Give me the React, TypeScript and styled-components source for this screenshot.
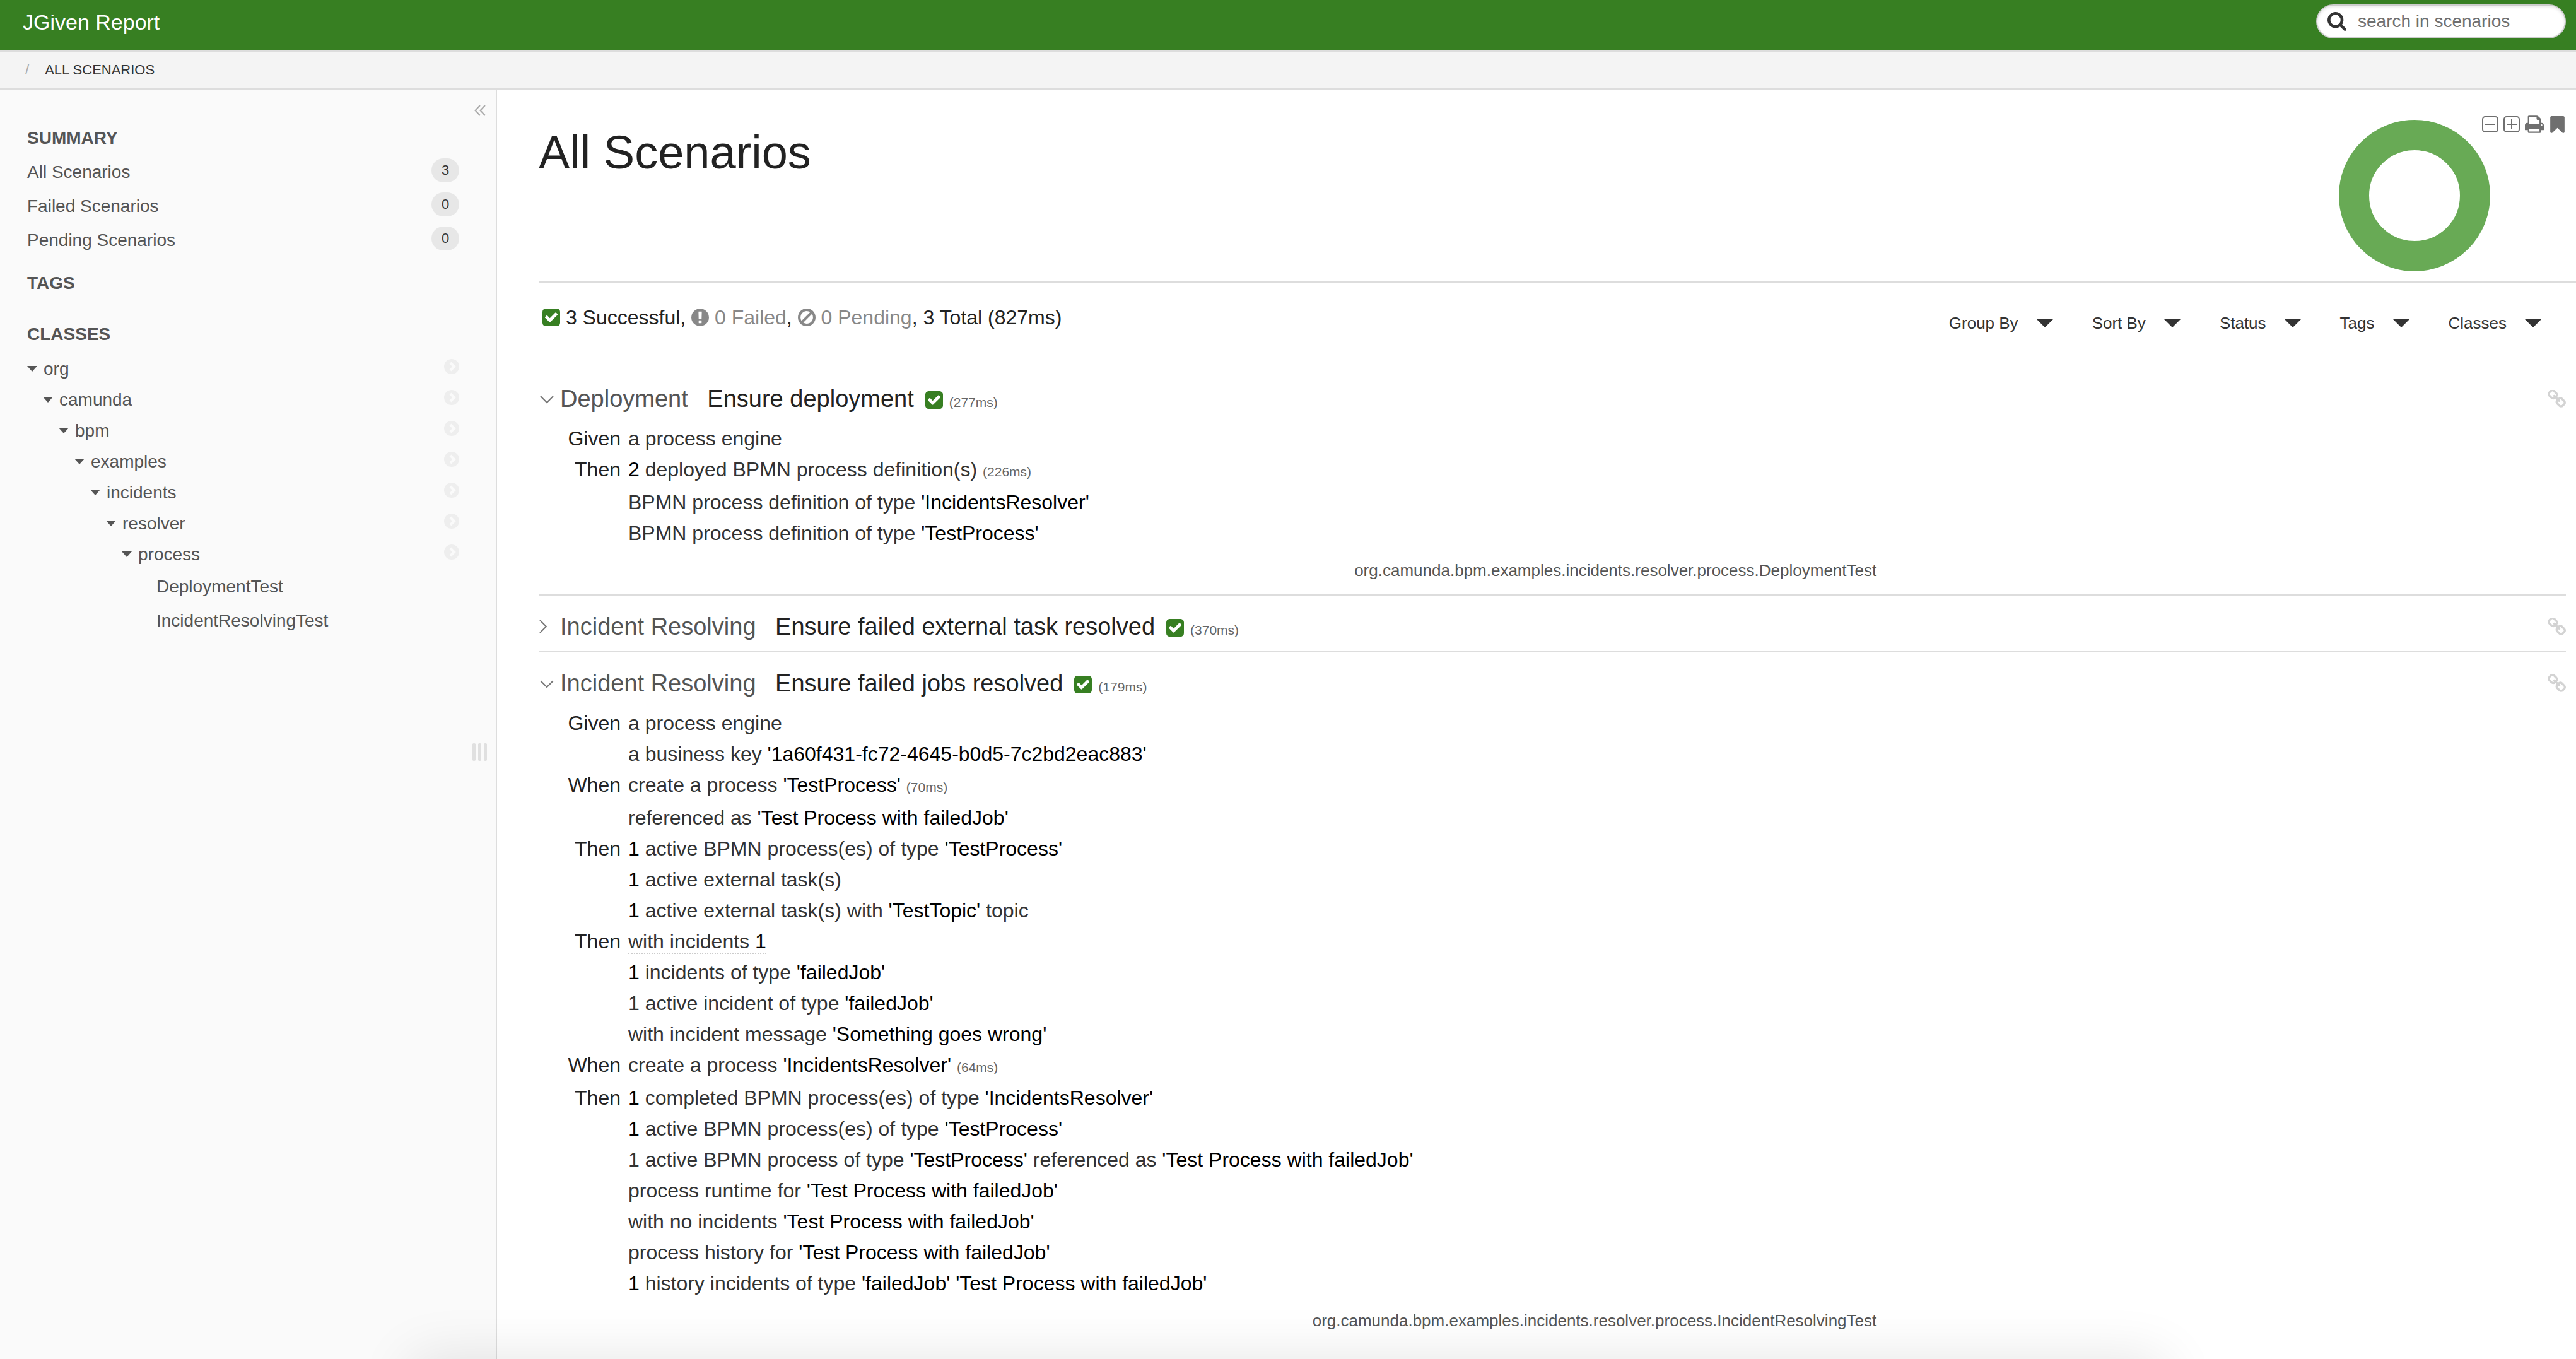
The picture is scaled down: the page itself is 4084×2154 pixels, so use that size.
import React from 'react';
import styled, { createGlobalStyle } from 'styled-components';

const GlobalStyle = createGlobalStyle`
  *, *::before, *::after { box-sizing: border-box; }
  body {
    margin: 0;
    background: #fff;
    color: #222;
    font-family: "Liberation Sans", Arial, sans-serif;
  }
  button {
    padding: 0;
    border: 0;
    background: none;
    color: inherit;
    font: inherit;
    text-align: left;
    cursor: pointer;
  }
  a { color: inherit; text-decoration: none; }
  ul { margin: 0; padding: 0; list-style: none; }
  svg { display: block; flex: none; }
`;

/* ---------- icons ---------- */

const Glyph = styled.svg<{ $size: number; $inline?: boolean }>`
  width: ${p => p.$size}px;
  height: ${p => p.$size}px;
  fill: currentColor;
  ${p => p.$inline && 'display: inline-block; vertical-align: -3px;'}
`;

const Stroke = styled(Glyph)`
  fill: none;
  stroke: currentColor;
`;

const CheckSquare = () => (
  <Glyph $size={28} $inline viewBox="128 128 1536 1536" aria-hidden="true">
    <path d="M813 1299l614-614q19-19 19-45t-19-45l-102-102q-19-19-45-19t-45 19l-467 467-211-211q-19-19-45-19t-45 19l-102 102q-19 19-19 45t19 45l358 358q19 19 45 19t45-19zm851-883v960q0 119-84.5 203.5t-203.5 84.5h-960q-119 0-203.5-84.5t-84.5-203.5v-960q0-119 84.5-203.5t203.5-84.5h960q119 0 203.5 84.5t84.5 203.5z" />
  </Glyph>
);

const Exclamation = () => (
  <Glyph $size={28} $inline viewBox="128 128 1536 1536" aria-hidden="true">
    <path d="M896 128q209 0 385.5 103t279.5 279.5 103 385.5-103 385.5-279.5 279.5-385.5 103-385.5-103-279.5-279.5-103-385.5 103-385.5 279.5-279.5 385.5-103zm128 1247v-190q0-14-9-23.5t-22-9.5h-192q-13 0-23 10t-10 23v190q0 13 10 23t23 10h192q13 0 22-9.5t9-23.5zm-2-344l18-621q0-12-10-18-10-8-24-8h-220q-14 0-24 8-10 6-10 18l17 621q0 10 10 17.5t24 7.5h185q14 0 23.5-7.5t10.5-17.5z" />
  </Glyph>
);

const Ban = () => (
  <Glyph $size={28} $inline viewBox="128 125 1536 1536" aria-hidden="true">
    <path d="M1440 893q0-161-87-295l-754 753q137 89 297 89 111 0 211.5-43.5t173.5-116.5 116-174.5 43-212.5zm-999 299l755-754q-135-91-300-91-148 0-273 73t-198 199-73 274q0 162 89 299zm1223-299q0 157-61 300t-163.5 246-245 164-298.5 61-298.5-61-245-164-163.5-246-61-300 61-299.5 163.5-245.5 245-164 298.5-61 298.5 61 245 164 163.5 245.5 61 299.5z" />
  </Glyph>
);

const SearchIcon = () => (
  <Glyph $size={30} viewBox="64 128 1664 1664" aria-hidden="true">
    <path d="M1216 832q0-185-131.5-316.5t-316.5-131.5-316.5 131.5-131.5 316.5 131.5 316.5 316.5 131.5 316.5-131.5 131.5-316.5zm512 832q0 52-38 90t-90 38q-54 0-90-38l-343-342q-179 124-399 124-143 0-273.5-55.5t-225-150-150-225-55.5-273.5 55.5-273.5 150-225 225-150 273.5-55.5 273.5 55.5 225 150 150 225 55.5 273.5q0 220-124 399l343 343q37 37 37 90z" />
  </Glyph>
);

const LinkIcon = () => (
  <Glyph $size={29} viewBox="80 80 1632 1632" aria-hidden="true">
    <path d="M1520 1216q0-40-28-68l-208-208q-28-28-68-28-42 0-72 32 3 3 19 18.5t21.5 21.5 15 19 13 25.5 3.5 27.5q0 40-28 68t-68 28q-15 0-27.5-3.5t-25.5-13-19-15-21.5-21.5-18.5-19q-33 31-33 73 0 40 28 68l206 207q27 27 68 27 40 0 68-26l147-146q28-28 28-67zm-703-705q0-40-28-68l-206-207q-28-28-68-28-39 0-68 27l-147 146q-28 28-28 67 0 40 28 68l208 208q27 27 68 27 42 0 72-31-3-3-19-18.5t-21.5-21.5-15-19-13-25.5-3.5-27.5q0-40 28-68t68-28q15 0 27.5 3.5t25.5 13 19 15 21.5 21.5 18.5 19q33-31 33-73zm895 705q0 120-85 203l-147 146q-83 83-203 83-121 0-204-85l-206-207q-83-83-83-203 0-123 88-209l-88-88q-86 88-208 88-120 0-204-84l-208-208q-84-84-84-204t85-203l147-146q83-83 203-83 121 0 204 85l206 207q83 83 83 203 0 123-88 209l88 88q86-88 208-88 120 0 204 84l208 208q84 84 84 204z" />
  </Glyph>
);

const PrintIcon = () => (
  <Glyph $size={30} viewBox="64 64 1664 1664" aria-hidden="true">
    <path d="M448 1536h896v-256h-896v256zm0-640h896v-384h-160q-40 0-68-28t-28-68v-160h-640v640zm1152 64q0-26-19-45t-45-19-45 19-19 45 19 45 45 19 45-19 19-45zm128 0v416q0 13-9.5 22.5t-22.5 9.5h-224v160q0 40-28 68t-68 28h-960q-40 0-68-28t-28-68v-160h-224q-13 0-22.5-9.5t-9.5-22.5v-416q0-79 56.5-135.5t135.5-56.5h64v-544q0-40 28-68t68-28h672q40 0 88 20t76 48l152 152q28 28 48 76t20 88v256h64q79 0 135.5 56.5t56.5 135.5z" />
  </Glyph>
);

const BookmarkIcon = () => (
  <Glyph $size={27} viewBox="134 128 1524 1524" aria-hidden="true">
    <path d="M1420 128q23 0 44 9 33 13 52.5 41t19.5 62v1289q0 34-19.5 62t-52.5 41q-19 8-44 8-48 0-83-32l-441-424-441 424q-36 33-83 33-23 0-44-9-33-13-52.5-41t-19.5-62v-1289q0-34 19.5-62t52.5-41q21-9 44-9h1048z" />
  </Glyph>
);

const BoxIcon = ({ plus = false }: { plus?: boolean }) => (
  <Stroke $size={26} viewBox="0 0 26 26" strokeWidth="2" aria-hidden="true">
    <rect x="1" y="1" width="24" height="24" rx="4" />
    <path d={plus ? 'M5 13h16M13 5v16' : 'M5 13h16'} />
  </Stroke>
);

const ChevronCircle = () => (
  <Glyph $size={24} viewBox="0 0 24 24" aria-hidden="true">
    <circle cx="12" cy="12" r="12" />
    <path d="M10 6l6 6-6 6" fill="none" stroke="#fafafa" strokeWidth="4" />
  </Glyph>
);

const DoubleAngle = () => (
  <Stroke $size={18} viewBox="0 0 18 18" strokeWidth="2" aria-hidden="true">
    <path d="M9 1L1.500 9 9 17M17 1L9.500 9 17 17" />
  </Stroke>
);

const Angle = ({ open }: { open: boolean }) => (
  <Stroke $size={24} viewBox="0 0 24 24" strokeWidth="2" aria-hidden="true">
    <path d={open ? 'M3 8l10 10L23 8' : 'M2 2l10 10L2 22'} />
  </Stroke>
);

/* ---------- page frame ---------- */

const Page = styled.div`
  display: flex;
  flex-direction: column;
  min-height: 100vh;
`;

const TopBar = styled.header`
  display: flex;
  align-items: center;
  justify-content: space-between;
  height: 80px;
  padding: 0 16px 12px 36px;
  background: #377f22;
  color: #fff;
`;

const Brand = styled.a`
  padding-top: 2px;
  font-size: 34px;
  line-height: 48px;
`;

const SearchBox = styled.label`
  display: flex;
  align-items: center;
  gap: 18px;
  width: 396px;
  height: 54px;
  padding: 0 18px 0 16px;
  border: 2px solid #ccc;
  border-radius: 27px;
  background: #fff;
  box-shadow: inset 0 2px 4px rgba(0, 0, 0, 0.1);
  color: #333;
`;

const SearchInput = styled.input`
  flex: 1;
  min-width: 0;
  padding: 0;
  border: 0;
  outline: 0;
  background: none;
  color: #333;
  font: 28px/40px "Liberation Sans", Arial, sans-serif;
  &::placeholder { color: #6f6f6f; opacity: 1; }
`;

const Breadcrumbs = styled.nav`
  display: flex;
  align-items: center;
  gap: 25px;
  height: 62px;
  padding-left: 40px;
  border: solid #ddd;
  border-width: 2px 0;
  background: #f4f4f4;
  color: #333;
  font-size: 22px;
  text-transform: uppercase;
`;

const Slash = styled.span`
  color: #aaa;
`;

const Body = styled.div`
  display: flex;
  flex: 1;
`;

/* ---------- sidebar ---------- */

const Sidebar = styled.aside`
  display: flex;
  flex: none;
  gap: 21px;
  width: 788px;
  padding-right: 14px;
  border-right: 2px solid #ddd;
  background: #fafafa;
  color: #555;
  font-size: 28px;
`;

const SidebarContent = styled.div`
  display: flex;
  flex: 1;
  flex-direction: column;
  gap: 14px;
  padding: 50px 0 0 43px;
`;

const Rail = styled.div`
  display: flex;
  flex-direction: column;
  align-items: center;
  width: 23px;
  padding-top: 24px;
`;

const CollapseButton = styled.button`
  color: #aaa;
`;

const Handle = styled.div`
  display: flex;
  flex: 1;
  align-items: center;
  gap: 4px;
  margin-top: 46px;
  &::before, &::after, & > span {
    content: "";
    width: 5px;
    height: 28px;
    border-radius: 2px;
    background: #e0e0e0;
  }
`;

const SideHeading = styled.h2`
  margin: 0;
  font-size: 28px;
  line-height: 54px;
  text-transform: uppercase;
`;

const SummaryRow = styled.li`
  display: flex;
  align-items: flex-start;
  justify-content: space-between;
  line-height: 54px;
`;

const Badge = styled.span`
  width: 44px;
  height: 38px;
  margin-top: 5px;
  border-radius: 19px;
  background: #e7e7e7;
  color: #333;
  font-size: 22px;
  line-height: 38px;
  text-align: center;
`;

const TagList = styled.ul`
  padding-bottom: 13px;
`;

const Tree = styled.ul`
  padding-top: 3px;
`;

const TreeRow = styled.li<{ $depth: number }>`
  display: flex;
  align-items: flex-start;
  justify-content: space-between;
  padding-left: ${p => p.$depth * 25}px;
  line-height: 49px;
`;

const LeafRow = styled(TreeRow)`
  line-height: 54px;
  & > a { margin-left: 30px; }
`;

const TreeToggle = styled.button`
  display: flex;
  align-items: center;
  gap: 10px;
  &::before {
    content: "";
    border: solid transparent;
    border-width: 9px 8px 0;
    border-top-color: #555;
  }
`;

const ShowButton = styled.button`
  padding-top: 9px;
  color: #eee;
`;

/* ---------- main column ---------- */

const Main = styled.main`
  flex: 1;
  min-width: 0;
  padding-left: 66px;
`;

const Hero = styled.header`
  position: relative;
  display: flex;
  justify-content: space-between;
  padding: 48px 136px 16px 0;
  border-bottom: 2px solid #ddd;
`;

const Title = styled.h1`
  margin: 0;
  font-size: 74px;
  font-weight: 400;
  line-height: 104px;
`;

const Donut = styled.svg`
  width: 240px;
  height: 240px;
  fill: none;
  stroke: #68aa55;
  stroke-width: 48px;
`;

const Tools = styled.div`
  position: absolute;
  top: 40px;
  right: 16px;
  display: flex;
  align-items: center;
  gap: 8px;
  color: #6f6f6f;
`;

const Toolbar = styled.div`
  display: flex;
  align-items: flex-start;
  justify-content: space-between;
  padding: 31px 54px 0 6px;
`;

const Statistics = styled.div`
  font-size: 32px;
  line-height: 48px;
`;

const Green = styled.span`
  color: #377f22;
`;

const Muted = styled.span`
  color: #888;
`;

const Filters = styled.div`
  display: flex;
  gap: 61px;
  padding-top: 9px;
`;

const FilterButton = styled.button`
  display: flex;
  align-items: center;
  gap: 28px;
  color: #333;
  font-size: 26px;
  line-height: 48px;
  &::after {
    content: "";
    border: solid transparent;
    border-width: 14px 14px 0;
    border-top-color: #333;
  }
`;

const Scenarios = styled.div`
  padding: 47px 16px 0 0;
`;

const Scenario = styled.section`
  padding: 24px 0 14px;
  & + & { border-top: 2px solid #ddd; }
`;

const ScenarioHead = styled.div`
  display: flex;
  align-items: center;
  justify-content: space-between;
`;

const ScenarioTitle = styled.h3`
  margin: 0;
  font-size: 38px;
  font-weight: 400;
  line-height: 50px;
`;

const ScenarioToggle = styled.button`
  display: flex;
  align-items: center;
  gap: 10px;
  color: #777;
`;

const ClassName = styled.span`
  margin-right: 20px;
  color: #555;
`;

const ScenarioName = styled.span`
  margin-right: 18px;
  color: #222;
`;

const Duration = styled.small`
  color: #666;
  font-size: 21px;
  line-height: 21px;
`;

const HeadDuration = styled(Duration)`
  margin-left: 10px;
`;

const Permalink = styled.a`
  color: #d3d3d3;
`;

const Steps = styled.div`
  margin-top: 14px;
  font-size: 32px;
  line-height: 49px;
`;

const Step = styled.div<{ $timed: boolean }>`
  display: grid;
  grid-template-columns: 130px 1fr;
  column-gap: 12px;
  padding-bottom: ${p => (p.$timed ? 3 : 0)}px;
`;

const Intro = styled.span`
  color: #222;
  text-align: right;
`;

const StepText = styled.div`
  color: #333;
`;

const Value = styled.span`
  color: #000;
`;

const Hint = styled.span`
  border-bottom: 2px dotted #ccc;
`;

const TestClass = styled.div`
  width: 66%;
  padding: 15px 0 5px;
  color: #555;
  font-size: 26px;
  line-height: 38px;
  text-align: right;
`;

const BottomShade = styled.div`
  position: fixed;
  top: 100%;
  left: 16%;
  right: 16%;
  height: 200px;
  box-shadow: 0 0 90px rgba(0, 0, 0, 0.11);
  pointer-events: none;
`;

/* ---------- data ---------- */

const summary = [
  { label: 'All Scenarios', count: 3 },
  { label: 'Failed Scenarios', count: 0 },
  { label: 'Pending Scenarios', count: 0 },
];

const packages = ['org', 'camunda', 'bpm', 'examples', 'incidents', 'resolver', 'process'];
const testClasses = ['DeploymentTest', 'IncidentResolvingTest'];
const filters = ['Group By', 'Sort By', 'Status', 'Tags', 'Classes'];

interface StepData {
  intro?: string;
  /* step arguments are wrapped in braces */
  text: string;
  time?: string;
  hint?: boolean;
}

interface ScenarioData {
  group: string;
  name: string;
  time: string;
  testClass?: string;
  steps?: StepData[];
}

const scenarios: ScenarioData[] = [
  {
    group: 'Deployment',
    name: 'Ensure deployment',
    time: '277ms',
    testClass: 'org.camunda.bpm.examples.incidents.resolver.process.DeploymentTest',
    steps: [
      { intro: 'Given', text: 'a process engine' },
      { intro: 'Then', text: '{2} deployed BPMN process definition(s)', time: '226ms' },
      { text: "BPMN process definition of type {'IncidentsResolver'}" },
      { text: "BPMN process definition of type {'TestProcess'}" },
    ],
  },
  { group: 'Incident Resolving', name: 'Ensure failed external task resolved', time: '370ms' },
  {
    group: 'Incident Resolving',
    name: 'Ensure failed jobs resolved',
    time: '179ms',
    testClass: 'org.camunda.bpm.examples.incidents.resolver.process.IncidentResolvingTest',
    steps: [
      { intro: 'Given', text: 'a process engine' },
      { text: "a business key {'1a60f431-fc72-4645-b0d5-7c2bd2eac883'}" },
      { intro: 'When', text: "create a process {'TestProcess'}", time: '70ms' },
      { text: "referenced as {'Test Process with failedJob'}" },
      { intro: 'Then', text: "{1} active BPMN process(es) of type {'TestProcess'}" },
      { text: '{1} active external task(s)' },
      { text: "{1} active external task(s) with {'TestTopic'} topic" },
      { intro: 'Then', text: 'with incidents {1}', hint: true },
      { text: "{1} incidents of type {'failedJob'}" },
      { text: "1 active incident of type {'failedJob'}" },
      { text: "with incident message {'Something goes wrong'}" },
      { intro: 'When', text: "create a process {'IncidentsResolver'}", time: '64ms' },
      { intro: 'Then', text: "{1} completed BPMN process(es) of type {'IncidentsResolver'}" },
      { text: "{1} active BPMN process(es) of type {'TestProcess'}" },
      { text: "1 active BPMN process of type {'TestProcess'} referenced as {'Test Process with failedJob'}" },
      { text: "process runtime for {'Test Process with failedJob'}" },
      { text: "with no incidents {'Test Process with failedJob'}" },
      { text: "process history for {'Test Process with failedJob'}" },
      { text: "{1} history incidents of type {'failedJob'} {'Test Process with failedJob'}" },
    ],
  },
];

const renderText = (text: string) =>
  text
    .split(/\{([^}]*)\}/)
    .map((part, i) => (i % 2 ? <Value key={i}>{part}</Value> : part));

const StepRow = ({ step }: { step: StepData }) => (
  <Step $timed={Boolean(step.time)}>
    <Intro>{step.intro}</Intro>
    <StepText>
      {step.hint ? <Hint>{renderText(step.text)}</Hint> : renderText(step.text)}
      {step.time && <> <Duration>({step.time})</Duration></>}
    </StepText>
  </Step>
);

const ScenarioBlock = ({ data }: { data: ScenarioData }) => {
  const open = Boolean(data.steps);
  return (
    <Scenario>
      <ScenarioHead>
        <ScenarioTitle>
          <ScenarioToggle aria-expanded={open}>
            <Angle open={open} />
            <span>
              <ClassName>{data.group}</ClassName>{' '}
              <ScenarioName>{data.name}</ScenarioName>
              <Green><CheckSquare /></Green>
              <HeadDuration>({data.time})</HeadDuration>
            </span>
          </ScenarioToggle>
        </ScenarioTitle>
        <Permalink href="#" aria-label="Link to scenario"><LinkIcon /></Permalink>
      </ScenarioHead>
      {data.steps && (
        <>
          <Steps>
            {data.steps.map((step, i) => <StepRow key={i} step={step} />)}
          </Steps>
          <TestClass><a href="#">{data.testClass}</a></TestClass>
        </>
      )}
    </Scenario>
  );
};

export default function App() {
  return (
    <>
      <GlobalStyle />
      <Page>
        <TopBar>
          <Brand href="#">JGiven Report</Brand>
          <SearchBox>
            <SearchIcon />
            <SearchInput type="text" placeholder="search in scenarios" aria-label="search in scenarios" />
          </SearchBox>
        </TopBar>
        <Breadcrumbs aria-label="Breadcrumbs">
          <Slash>/</Slash>
          <a href="#">All Scenarios</a>
        </Breadcrumbs>
        <Body>
          <Sidebar>
            <SidebarContent>
              <section>
                <SideHeading>Summary</SideHeading>
                <ul>
                  {summary.map(item => (
                    <SummaryRow key={item.label}>
                      <a href="#">{item.label}</a>
                      <Badge>{item.count}</Badge>
                    </SummaryRow>
                  ))}
                </ul>
              </section>
              <section>
                <SideHeading>Tags</SideHeading>
                <TagList />
              </section>
              <section>
                <SideHeading>Classes</SideHeading>
                <Tree>
                  {packages.map((name, depth) => (
                    <TreeRow key={name} $depth={depth}>
                      <TreeToggle aria-expanded="true">{name}</TreeToggle>
                      <ShowButton aria-label={`Show ${name}`}><ChevronCircle /></ShowButton>
                    </TreeRow>
                  ))}
                  {testClasses.map(name => (
                    <LeafRow key={name} $depth={packages.length}>
                      <a href="#">{name}</a>
                    </LeafRow>
                  ))}
                </Tree>
              </section>
            </SidebarContent>
            <Rail>
              <CollapseButton aria-label="Collapse sidebar"><DoubleAngle /></CollapseButton>
              <Handle><span /></Handle>
            </Rail>
          </Sidebar>
          <Main>
            <Hero>
              <Title>All Scenarios</Title>
              <Donut viewBox="0 0 240 240" role="img" aria-label="3 successful">
                <circle cx="120" cy="120" r="96" />
              </Donut>
              <Tools>
                <button aria-label="Collapse all"><BoxIcon /></button>
                <button aria-label="Expand all"><BoxIcon plus /></button>
                <button aria-label="Print"><PrintIcon /></button>
                <button aria-label="Bookmark"><BookmarkIcon /></button>
              </Tools>
            </Hero>
            <Toolbar>
              <Statistics>
                <Green><CheckSquare /></Green> 3 Successful, <Muted><Exclamation /> 0 Failed</Muted>,{' '}
                <Muted><Ban /> 0 Pending</Muted>, 3 Total (827ms)
              </Statistics>
              <Filters>
                {filters.map(name => (
                  <FilterButton key={name} aria-haspopup="menu">{name}</FilterButton>
                ))}
              </Filters>
            </Toolbar>
            <Scenarios>
              {scenarios.map(data => <ScenarioBlock key={data.name} data={data} />)}
            </Scenarios>
          </Main>
        </Body>
      </Page>
      <BottomShade />
    </>
  );
}
